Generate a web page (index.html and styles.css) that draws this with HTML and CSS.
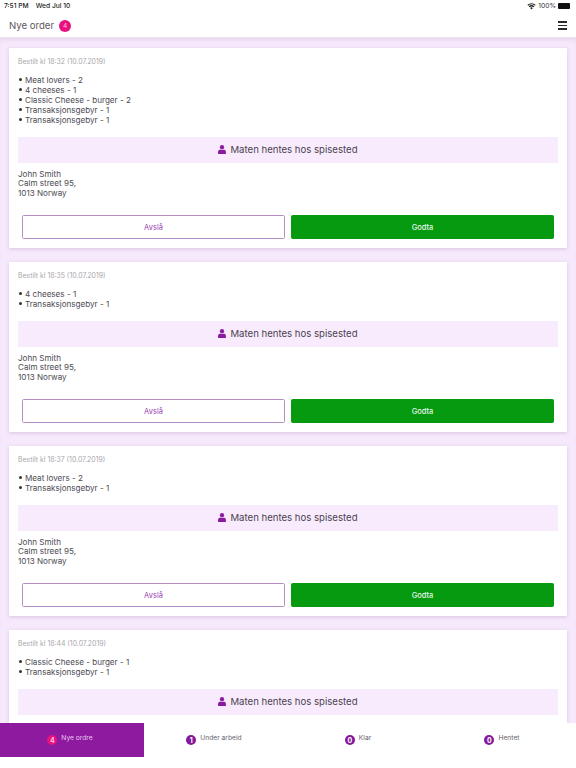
FILE: index.html
```html
<!DOCTYPE html>
<html lang="no">
<head>
<meta charset="utf-8">
<title>Nye order</title>
<link rel="stylesheet" href="styles.css">
</head>
<body>
<div class="app">
  <header class="top">
    <div class="status">
      <div class="status-left"><span>7:51 PM</span><span>Wed Jul 10</span></div>
      <div class="status-right">
        <svg class="wifi" viewBox="0 0 16 12" width="9" height="7"><path d="M8 11.500 5.600 8.600a3.600 3.600 0 0 1 4.800 0z M4.500 7.400 3.100 5.700a7.400 7.400 0 0 1 9.800 0l-1.400 1.700a5.300 5.300 0 0 0-7 0z M2.200 4.600.7 2.900a11 11 0 0 1 14.600 0l-1.500 1.700a8.800 8.800 0 0 0-11.600 0z"/></svg>
        <span>100%</span>
        <span class="battery"><span class="battery-fill"></span></span>
      </div>
    </div>
    <div class="nav">
      <div class="nav-title"><span>Nye order</span><span class="badge">4</span></div>
      <div class="burger"><i></i><i></i><i></i></div>
    </div>
  </header>

  <main class="list">
    <section class="card">
      <p class="date">Bestilt kl 18:32 (10.07.2019)</p>
      <ul class="items">
        <li>Meat lovers - 2</li>
        <li>4 cheeses - 1</li>
        <li>Classic Cheese - burger - 2</li>
        <li>Transaksjonsgebyr - 1</li>
        <li>Transaksjonsgebyr - 1</li>
      </ul>
      <div class="pickup">
        <svg class="user" viewBox="0 0 14 16" width="8" height="9"><circle cx="7" cy="4" r="3.800"/><path d="M0 16v-3.200C0 9.800 2 8 4 8c1 .7 2 1 3 1s2-.3 3-1c2 0 4 1.800 4 4.800V16z"/></svg>
        <span>Maten hentes hos spisested</span>
      </div>
      <address class="addr">John Smith<br>Calm street 95,<br>1013 Norway</address>
      <div class="actions"><button class="btn reject">Avslå</button><button class="btn accept">Godta</button></div>
    </section>

    <section class="card">
      <p class="date">Bestilt kl 18:35 (10.07.2019)</p>
      <ul class="items">
        <li>4 cheeses - 1</li>
        <li>Transaksjonsgebyr - 1</li>
      </ul>
      <div class="pickup">
        <svg class="user" viewBox="0 0 14 16" width="8" height="9"><circle cx="7" cy="4" r="3.800"/><path d="M0 16v-3.200C0 9.800 2 8 4 8c1 .7 2 1 3 1s2-.3 3-1c2 0 4 1.800 4 4.800V16z"/></svg>
        <span>Maten hentes hos spisested</span>
      </div>
      <address class="addr">John Smith<br>Calm street 95,<br>1013 Norway</address>
      <div class="actions"><button class="btn reject">Avslå</button><button class="btn accept">Godta</button></div>
    </section>

    <section class="card">
      <p class="date">Bestilt kl 18:37 (10.07.2019)</p>
      <ul class="items">
        <li>Meat lovers - 2</li>
        <li>Transaksjonsgebyr - 1</li>
      </ul>
      <div class="pickup">
        <svg class="user" viewBox="0 0 14 16" width="8" height="9"><circle cx="7" cy="4" r="3.800"/><path d="M0 16v-3.200C0 9.800 2 8 4 8c1 .7 2 1 3 1s2-.3 3-1c2 0 4 1.800 4 4.800V16z"/></svg>
        <span>Maten hentes hos spisested</span>
      </div>
      <address class="addr">John Smith<br>Calm street 95,<br>1013 Norway</address>
      <div class="actions"><button class="btn reject">Avslå</button><button class="btn accept">Godta</button></div>
    </section>

    <section class="card">
      <p class="date">Bestilt kl 18:44 (10.07.2019)</p>
      <ul class="items">
        <li>Classic Cheese - burger - 1</li>
        <li>Transaksjonsgebyr - 1</li>
      </ul>
      <div class="pickup">
        <svg class="user" viewBox="0 0 14 16" width="8" height="9"><circle cx="7" cy="4" r="3.800"/><path d="M0 16v-3.200C0 9.800 2 8 4 8c1 .7 2 1 3 1s2-.3 3-1c2 0 4 1.800 4 4.800V16z"/></svg>
        <span>Maten hentes hos spisested</span>
      </div>
    </section>
  </main>

  <nav class="tabs">
    <div class="tab active"><span class="count hot">4</span><span class="tab-label">Nye ordre</span></div>
    <div class="tab"><span class="count">1</span><span class="tab-label">Under arbeid</span></div>
    <div class="tab"><span class="count">0</span><span class="tab-label">Klar</span></div>
    <div class="tab"><span class="count">0</span><span class="tab-label">Hentet</span></div>
  </nav>
</div>
</body>
</html>
```

FILE: styles.css
```css
* { box-sizing: border-box; }
html, body { margin: 0; padding: 0; }
body {
  width: 576px;
  height: 768px;
  overflow: hidden;
  background: #fff;
  font-family: "Inter", "Liberation Sans", sans-serif;
  color: #45414a;
}
.app {
  display: flex;
  flex-direction: column;
  height: 768px;
}
.top {
  flex: none;
  height: 38px;
  background: #fff;
  border-bottom: 1px solid #f0e4f3;
}
.status {
  height: 12px;
  padding: 0 5px 0 4px;
  display: flex;
  justify-content: space-between;
  align-items: center;
  font-size: 6.700px;
  font-weight: 500;
  color: #222;
}
.status-left { display: flex; gap: 7px; }
.status-right { display: flex; align-items: center; gap: 2px; font-weight: 400; color: #333; }
.wifi { fill: #222; }
.battery {
  display: block;
  width: 13px;
  height: 6px;
  padding: 0 1px 0 0;
}
.battery-fill { display: block; height: 100%; background: #111; border-radius: 1px; }
.nav {
  height: 25px;
  padding: 2px 9px 0;
  display: flex;
  justify-content: space-between;
  align-items: center;
}
.nav-title {
  display: flex;
  align-items: center;
  gap: 5px;
  font-size: 9.600px;
  color: #5b5760;
}
.badge {
  width: 12px;
  height: 12px;
  border-radius: 50%;
  background: #e9117f;
  color: #f7c3dc;
  font-size: 6.500px;
  display: flex;
  align-items: center;
  justify-content: center;
}
.burger {
  display: flex;
  flex-direction: column;
  gap: 2px;
  width: 9px;
}
.burger i { display: block; height: 1.500px; background: #2b2b2b; }
.list {
  flex: 1;
  min-height: 0;
  overflow: hidden;
  padding: 9.500px 9px 0;
  background: #f7e9fc;
  box-shadow: inset 0 4px 4px -2px rgba(90, 60, 110, 0.10);
}
.card {
  background: #fff;
  padding: 9px 9px 8.500px;
  margin-bottom: 14px;
  box-shadow: 0 1px 4px rgba(90, 50, 110, 0.20);
}
.date {
  margin: 0;
  font-size: 6.900px;
  line-height: 10px;
  color: #a9a6ad;
}
.items {
  margin: 8px 0 0;
  padding: 0;
  list-style: none;
  font-size: 8.100px;
  line-height: 10px;
  color: #4d4a52;
}
.items li::before {
  content: "";
  display: inline-block;
  width: 3px;
  height: 3px;
  margin: 0 3px 1px 1px;
  border-radius: 50%;
  background: #333;
  vertical-align: middle;
}
.pickup {
  margin-top: 12px;
  height: 26px;
  background: #f9ebfe;
  display: flex;
  align-items: center;
  justify-content: center;
  gap: 4px;
  font-size: 9.600px;
  color: #48434e;
}
.user { fill: #8c1a9e; }
.addr {
  margin-top: 7px;
  font-style: normal;
  font-size: 8.100px;
  line-height: 9.500px;
  color: #4d4a52;
}
.actions {
  margin-top: 17px;
  padding: 0 4px;
  display: flex;
  gap: 6px;
}
.btn {
  flex: 1;
  height: 24px;
  border-radius: 1.500px;
  font-family: inherit;
  font-size: 7.500px;
  font-weight: 400;
  padding: 0;
}
.reject { background: #fff; border: 1px solid #b78dc4; color: #9c3fb5; }
.accept { background: #059a0f; border: 1px solid #059a0f; color: #e6f5e6; font-weight: 500; }
.tabs {
  flex: none;
  height: 45px;
  background: #fff;
  display: grid;
  grid-template-columns: repeat(4, 144px);
  align-items: start;
}
.tab {
  height: 34px;
  display: flex;
  justify-content: center;
  align-items: flex-start;
  gap: 4px;
  padding: 10px 4px 0 0;
  font-size: 6.700px;
  line-height: 9px;
  color: #65616a;
}
.tab-label { margin-top: 0.500px; }
.active { background: #8e1aa0; color: #e9c8ef; }
.count {
  width: 10px;
  height: 10px;
  margin-top: 2px;
  border-radius: 50%;
  background: #85189b;
  color: #fff;
  font-size: 7px;
  font-weight: 700;
  display: flex;
  align-items: center;
  justify-content: center;
}
.hot { background: #e9117f; color: #f7c3dc; }
```
